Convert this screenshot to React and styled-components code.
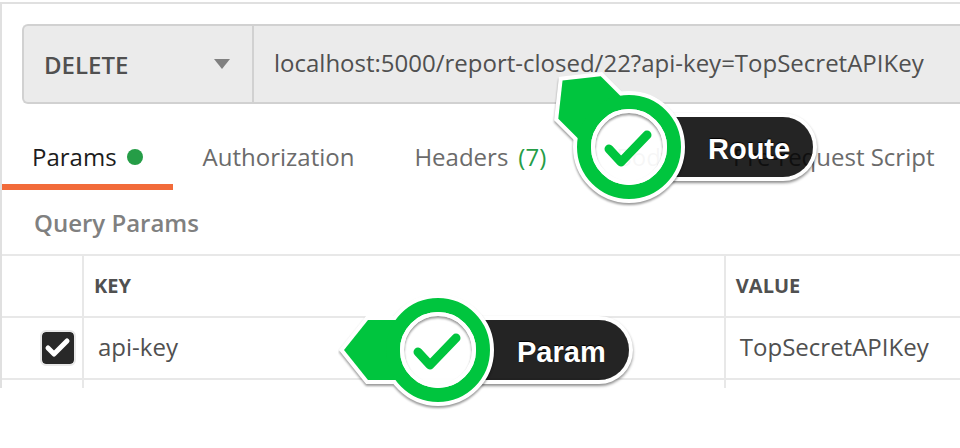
import React from "react";
import styled, { createGlobalStyle, css } from "styled-components";

const GlobalStyle = createGlobalStyle`
  *, *::before, *::after { box-sizing: border-box; }
  html { overflow: hidden; }
  body {
    margin: 0;
    background: #fff;
    color: #505050;
    font-family: "Open Sans", sans-serif;
    font-size: 24px;
    line-height: 32px;
  }
  button, input, select { font: inherit; color: inherit; }
`;

const Pane = styled.main`
  position: relative;
  padding: 2px 0 60px;
  overflow: hidden;
`;

const PaneBody = styled.div`
  border-left: 2px solid #e0e0e0;
`;

const RequestSection = styled.section`
  border-top: 2px solid #e0e0e0;
  padding: 20px 0 0 20px;
`;

const RequestBar = styled.form`
  display: flex;
  height: 80px;
  background: #ebebeb;
  border: 2px solid #d1d1d1;
  border-right: 0;
  border-radius: 6px 0 0 6px;
`;

const MethodField = styled.div`
  display: grid;
  flex: 0 0 230px;
  align-items: center;
  border-right: 2px solid #d1d1d1;

  > * { grid-area: 1 / 1; }
`;

const MethodSelect = styled.select`
  appearance: none;
  width: 100%;
  height: 100%;
  padding: 2px 48px 0 20px;
  border: 0;
  background: transparent;
  font-weight: 600;
  outline: none;
`;

const Caret = styled.svg`
  justify-self: end;
  margin-right: 22px;
  width: 16px;
  height: 10px;
  pointer-events: none;
`;

const UrlInput = styled.input`
  flex: 1;
  min-width: 0;
  padding: 0 20px 2px;
  border: 0;
  background: transparent;
  outline: none;
`;

const Tabs = styled.nav`
  display: flex;
  height: 86px;
`;

const Tab = styled.button`
  display: flex;
  flex: none;
  align-items: center;
  gap: 10px;
  padding: 26px 30px 0;
  border: 0;
  border-bottom: 6px solid transparent;
  background: transparent;
  color: #6b6b6b;
  white-space: nowrap;
  ${(p) => p.$active && css`
    color: #1c1c1c;
    border-bottom-color: #f26b3a;
  `}
`;

const Dot = styled.span`
  width: 16px;
  height: 16px;
  border-radius: 50%;
  background: #259d47;
`;

const Count = styled.span`
  margin-right: 10px;
  color: #259d47;
`;

const SectionTitle = styled.h2`
  margin: 0;
  padding: 17px 32px 15px;
  color: #808080;
  font-size: 24px;
  font-weight: 600;
`;

const ParamsTable = styled.table`
  width: 100%;
  table-layout: fixed;
  border-collapse: separate;
  border-spacing: 0;
`;

const CheckColumn = styled.col`
  width: 80px;
`;

const KeyColumn = styled.col`
  width: 67%;
`;

const Row = styled.tr`
  height: ${(p) => (p.$stub ? "10px" : "62px")};
`;

const cell = css`
  border-top: 2px solid #e8e8e8;
  border-left: ${(p) => (p.$first ? "0" : "2px solid #e8e8e8")};
  text-align: left;
`;

const HeadCell = styled.th`
  ${cell}
  padding: 0 10px;
  font-size: 20px;
  font-weight: 700;
`;

const Cell = styled.td`
  ${cell}
  padding: ${(p) => (p.$first ? "0 4px 0 38px" : "0 14px 2px")};
`;

const CheckLabel = styled.label`
  display: grid;
  width: 36px;
  height: 36px;

  > * { grid-area: 1 / 1; }
`;

const CheckInput = styled.input`
  appearance: none;
  width: 36px;
  height: 36px;
  margin: 0;
  border: 2px solid #e8e8e8;
  border-radius: 6px;
  background: #fff;
  &:checked { background: #282828; background-clip: padding-box; }
`;

const CheckMark = styled.svg`
  width: 36px;
  height: 36px;
  pointer-events: none;
`;

const CalloutRoot = styled.aside`
  position: absolute;
  left: ${(p) => p.$x}px;
  top: ${(p) => p.$y}px;
  display: grid;
  align-items: center;
  pointer-events: none;

  > * { grid-area: 1 / 1; }
`;

const Pill = styled.span`
  height: 60px;
  margin-left: 146px;
  padding: 0 23px 0 33px;
  border-radius: 0 30px 30px 0;
  background: rgba(0, 0, 0, 0.86);
  box-shadow: 0 0 0 4px #fff, 0 2px 3px 4px rgba(0, 0, 0, 0.45);
  color: #fff;
  font: bold 29px/64px "Liberation Sans", sans-serif;
  text-shadow: 0 -1px 1px #000;
`;

const Marker = styled.svg`
  width: 200px;
  height: 200px;
`;

const Badge = styled.g`
  filter: drop-shadow(0 2px 1px rgba(0, 0, 0, 0.4));
`;

const POINTER = "M-94 0L-70-30H-42V30H-70Z";
const POINTER_GREEN = "M-94 0L-70-30H-42L-38 0L-42 30H-70Z";

function Callout({ x, y, angle, label }) {
  return (
    <CalloutRoot $x={x} $y={y}>
      <Pill>{label}</Pill>
      <Marker viewBox="-100 -100 200 200" aria-hidden="true">
        <circle r="37" fill="#fff" fillOpacity="0.94" />
        <Badge>
          <g transform={`rotate(${angle})`}>
            <path d={POINTER} fill="#fff" stroke="#fff" strokeWidth="8" />
            <circle r="45" fill="none" stroke="#fff" strokeWidth="22" />
            <path d={POINTER_GREEN} fill="#00c53e" />
            <circle r="45" fill="none" stroke="#00c53e" strokeWidth="14" />
            <circle r="36" fill="none" stroke="#fff" strokeWidth="4" />
          </g>
        </Badge>
        <path
          d="M-20 2L-8 15L18-12"
          fill="none"
          stroke="#00c53e"
          strokeWidth="9"
          strokeLinecap="round"
          strokeLinejoin="round"
        />
      </Marker>
    </CalloutRoot>
  );
}

export default function App() {
  return (
    <>
      <GlobalStyle />
      <Pane>
        <PaneBody>
          <RequestSection>
            <RequestBar>
              <MethodField>
                <MethodSelect aria-label="Method" defaultValue="DELETE">
                  <option>DELETE</option>
                  <option>GET</option>
                  <option>POST</option>
                </MethodSelect>
                <Caret viewBox="0 0 16 10" aria-hidden="true">
                  <path d="M0 0H16L8 10Z" fill="#808080" />
                </Caret>
              </MethodField>
              <UrlInput
                aria-label="Request URL"
                defaultValue="localhost:5000/report-closed/22?api-key=TopSecretAPIKey"
              />
            </RequestBar>
          </RequestSection>
          <Tabs>
            <Tab $active>Params<Dot /></Tab>
            <Tab>Authorization</Tab>
            <Tab>Headers <Count>(7)</Count></Tab>
            <Tab>Body</Tab>
            <Tab>Pre-request Script</Tab>
          </Tabs>
          <SectionTitle>Query Params</SectionTitle>
          <ParamsTable>
            <colgroup>
              <CheckColumn />
              <KeyColumn />
              <col />
            </colgroup>
            <thead>
              <Row>
                <HeadCell $first aria-label="Enabled" />
                <HeadCell>KEY</HeadCell>
                <HeadCell>VALUE</HeadCell>
              </Row>
            </thead>
            <tbody>
              <Row>
                <Cell $first>
                  <CheckLabel>
                    <CheckInput type="checkbox" defaultChecked aria-label="Enable api-key" />
                    <CheckMark viewBox="0 0 36 36" aria-hidden="true">
                      <path
                        d="M8 18L14 24L27 11"
                        fill="none"
                        stroke="#fff"
                        strokeWidth="5"
                        strokeLinecap="round"
                        strokeLinejoin="round"
                      />
                    </CheckMark>
                  </CheckLabel>
                </Cell>
                <Cell>api-key</Cell>
                <Cell>TopSecretAPIKey</Cell>
              </Row>
              <Row $stub>
                <Cell $first />
                <Cell />
                <Cell />
              </Row>
            </tbody>
          </ParamsTable>
        </PaneBody>
        <Callout x={529} y={47} angle={45} label="Route" />
        <Callout x={338} y={250} angle={0} label="Param" />
      </Pane>
    </>
  );
}
